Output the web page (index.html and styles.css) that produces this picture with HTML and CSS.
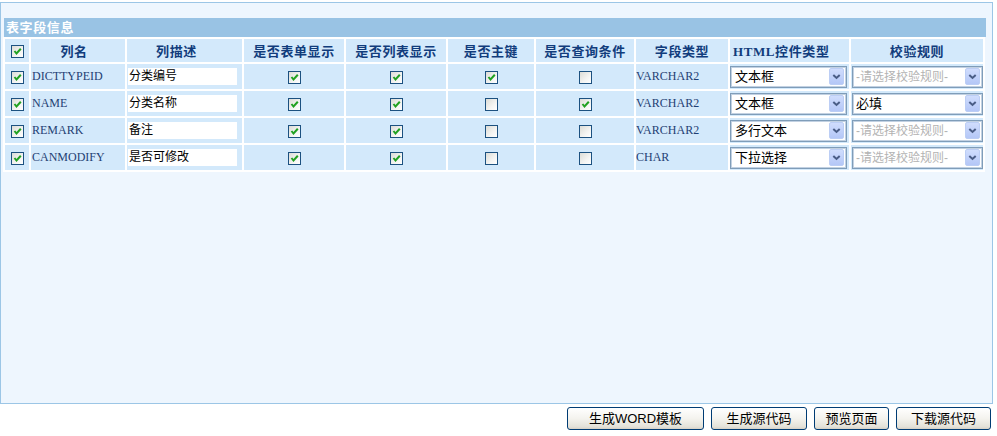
FILE: index.html
```html
<!DOCTYPE html>
<html lang="zh">
<head>
<meta charset="utf-8">
<title>表字段信息</title>
<link rel="stylesheet" href="styles.css">
</head>
<body>
<div class="panel">
  <div class="title">表字段信息</div>
  <table class="grid">
    <colgroup>
      <col class="c1"><col class="c2"><col class="c3"><col class="c4"><col class="c5">
      <col class="c6"><col class="c7"><col class="c8"><col class="c9"><col class="c10">
    </colgroup>
    <thead>
      <tr>
        <th><span class="cb"><svg viewBox="0 0 11 11" width="11" height="11"><path d="M2.5 5 L4.5 7.5 L8.8 2.8" fill="none" stroke="#21a121" stroke-width="2"/></svg></span></th>
        <th class="h-name">列名</th>
        <th class="h-desc">列描述</th>
        <th>是否表单显示</th>
        <th>是否列表显示</th>
        <th>是否主键</th>
        <th>是否查询条件</th>
        <th>字段类型</th>
        <th class="h-html">HTML控件类型</th>
        <th>校验规则</th>
      </tr>
    </thead>
    <tbody>
      <tr>
        <td class="ctr"><span class="cb"><svg viewBox="0 0 11 11" width="11" height="11"><path d="M2.5 5 L4.5 7.5 L8.8 2.8" fill="none" stroke="#21a121" stroke-width="2"/></svg></span></td>
        <td class="name">DICTTYPEID</td>
        <td><div class="txt">分类编号</div></td>
        <td class="ctr"><span class="cb"><svg viewBox="0 0 11 11" width="11" height="11"><path d="M2.5 5 L4.5 7.5 L8.8 2.8" fill="none" stroke="#21a121" stroke-width="2"/></svg></span></td>
        <td class="ctr"><span class="cb"><svg viewBox="0 0 11 11" width="11" height="11"><path d="M2.5 5 L4.5 7.5 L8.8 2.8" fill="none" stroke="#21a121" stroke-width="2"/></svg></span></td>
        <td class="ctr"><span class="cb"><svg viewBox="0 0 11 11" width="11" height="11"><path d="M2.5 5 L4.5 7.5 L8.8 2.8" fill="none" stroke="#21a121" stroke-width="2"/></svg></span></td>
        <td class="ctr"><span class="cb"></span></td>
        <td class="type">VARCHAR2</td>
        <td><div class="sel sel-ctrl"><span class="val">文本框</span><span class="arrow"><svg viewBox="0 0 13 15" width="13" height="15"><path d="M3.3 6 L6.5 9 L9.7 6" fill="none" stroke="#4a5d86" stroke-width="2"/></svg></span></div></td>
        <td><div class="sel sel-rule"><span class="val ph">-请选择校验规则-</span><span class="arrow"><svg viewBox="0 0 13 15" width="13" height="15"><path d="M3.3 6 L6.5 9 L9.7 6" fill="none" stroke="#4a5d86" stroke-width="2"/></svg></span></div></td>
      </tr>
      <tr>
        <td class="ctr"><span class="cb"><svg viewBox="0 0 11 11" width="11" height="11"><path d="M2.5 5 L4.5 7.5 L8.8 2.8" fill="none" stroke="#21a121" stroke-width="2"/></svg></span></td>
        <td class="name">NAME</td>
        <td><div class="txt">分类名称</div></td>
        <td class="ctr"><span class="cb"><svg viewBox="0 0 11 11" width="11" height="11"><path d="M2.5 5 L4.5 7.5 L8.8 2.8" fill="none" stroke="#21a121" stroke-width="2"/></svg></span></td>
        <td class="ctr"><span class="cb"><svg viewBox="0 0 11 11" width="11" height="11"><path d="M2.5 5 L4.5 7.5 L8.8 2.8" fill="none" stroke="#21a121" stroke-width="2"/></svg></span></td>
        <td class="ctr"><span class="cb"></span></td>
        <td class="ctr"><span class="cb"><svg viewBox="0 0 11 11" width="11" height="11"><path d="M2.5 5 L4.5 7.5 L8.8 2.8" fill="none" stroke="#21a121" stroke-width="2"/></svg></span></td>
        <td class="type">VARCHAR2</td>
        <td><div class="sel sel-ctrl"><span class="val">文本框</span><span class="arrow"><svg viewBox="0 0 13 15" width="13" height="15"><path d="M3.3 6 L6.5 9 L9.7 6" fill="none" stroke="#4a5d86" stroke-width="2"/></svg></span></div></td>
        <td><div class="sel sel-rule"><span class="val">必填</span><span class="arrow"><svg viewBox="0 0 13 15" width="13" height="15"><path d="M3.3 6 L6.5 9 L9.7 6" fill="none" stroke="#4a5d86" stroke-width="2"/></svg></span></div></td>
      </tr>
      <tr>
        <td class="ctr"><span class="cb"><svg viewBox="0 0 11 11" width="11" height="11"><path d="M2.5 5 L4.5 7.5 L8.8 2.8" fill="none" stroke="#21a121" stroke-width="2"/></svg></span></td>
        <td class="name">REMARK</td>
        <td><div class="txt">备注</div></td>
        <td class="ctr"><span class="cb"><svg viewBox="0 0 11 11" width="11" height="11"><path d="M2.5 5 L4.5 7.5 L8.8 2.8" fill="none" stroke="#21a121" stroke-width="2"/></svg></span></td>
        <td class="ctr"><span class="cb"><svg viewBox="0 0 11 11" width="11" height="11"><path d="M2.5 5 L4.5 7.5 L8.8 2.8" fill="none" stroke="#21a121" stroke-width="2"/></svg></span></td>
        <td class="ctr"><span class="cb"></span></td>
        <td class="ctr"><span class="cb"></span></td>
        <td class="type">VARCHAR2</td>
        <td><div class="sel sel-ctrl"><span class="val">多行文本</span><span class="arrow"><svg viewBox="0 0 13 15" width="13" height="15"><path d="M3.3 6 L6.5 9 L9.7 6" fill="none" stroke="#4a5d86" stroke-width="2"/></svg></span></div></td>
        <td><div class="sel sel-rule"><span class="val ph">-请选择校验规则-</span><span class="arrow"><svg viewBox="0 0 13 15" width="13" height="15"><path d="M3.3 6 L6.5 9 L9.7 6" fill="none" stroke="#4a5d86" stroke-width="2"/></svg></span></div></td>
      </tr>
      <tr>
        <td class="ctr"><span class="cb"><svg viewBox="0 0 11 11" width="11" height="11"><path d="M2.5 5 L4.5 7.5 L8.8 2.8" fill="none" stroke="#21a121" stroke-width="2"/></svg></span></td>
        <td class="name">CANMODIFY</td>
        <td><div class="txt">是否可修改</div></td>
        <td class="ctr"><span class="cb"><svg viewBox="0 0 11 11" width="11" height="11"><path d="M2.5 5 L4.5 7.5 L8.8 2.8" fill="none" stroke="#21a121" stroke-width="2"/></svg></span></td>
        <td class="ctr"><span class="cb"><svg viewBox="0 0 11 11" width="11" height="11"><path d="M2.5 5 L4.5 7.5 L8.8 2.8" fill="none" stroke="#21a121" stroke-width="2"/></svg></span></td>
        <td class="ctr"><span class="cb"></span></td>
        <td class="ctr"><span class="cb"></span></td>
        <td class="type">CHAR</td>
        <td><div class="sel sel-ctrl"><span class="val">下拉选择</span><span class="arrow"><svg viewBox="0 0 13 15" width="13" height="15"><path d="M3.3 6 L6.5 9 L9.7 6" fill="none" stroke="#4a5d86" stroke-width="2"/></svg></span></div></td>
        <td><div class="sel sel-rule"><span class="val ph">-请选择校验规则-</span><span class="arrow"><svg viewBox="0 0 13 15" width="13" height="15"><path d="M3.3 6 L6.5 9 L9.7 6" fill="none" stroke="#4a5d86" stroke-width="2"/></svg></span></div></td>
      </tr>
    </tbody>
  </table>
</div>
<div class="actions">
  <button class="btn btn-word">生成WORD模板</button>
  <button class="btn btn-src">生成源代码</button>
  <button class="btn btn-prev">预览页面</button>
  <button class="btn btn-down">下载源代码</button>
</div>
</body>
</html>
```

FILE: styles.css
```css
html, body {
  margin: 0;
  padding: 0;
  background: #ffffff;
}

body {
  font-family: "Liberation Serif", "Noto Sans CJK SC", serif;
  font-size: 12px;
}

.panel {
  box-sizing: border-box;
  width: 993px;
  height: 402px;
  margin-top: 2px;
  border: 1px solid #9cc6e6;
  background: #eef6fe;
  padding: 15px 0 0 3px;
}

.title {
  width: 982px;
  height: 19px;
  background: #99c3e4;
  color: #ffffff;
  font-family: "Liberation Serif", "Noto Sans CJK SC", serif;
  font-weight: bold;
  font-size: 13px;
  line-height: 19px;
  padding-left: 2px;
  box-sizing: border-box;
  letter-spacing: 0.6px;
}

.grid {
  margin-left: -1px;
  width: 982px;
  table-layout: fixed;
  border-collapse: separate;
  border-spacing: 2px;
  background: #ffffff;
}

.c1 { width: 24px; }
.c2 { width: 94px; }
.c3 { width: 115px; }
.c4 { width: 100px; }
.c5 { width: 100px; }
.c6 { width: 86px; }
.c7 { width: 98px; }
.c8 { width: 92px; }
.c9 { width: 119px; }
.c10 { width: 132px; }

.grid th,
.grid td {
  background: #d3e9fb;
  padding: 0;
  vertical-align: middle;
  overflow: hidden;
  white-space: nowrap;
}

.grid th {
  height: 23px;
  color: #113c7c;
  font-family: "Liberation Serif", "Noto Sans CJK SC", serif;
  font-weight: bold;
  font-size: 13px;
  letter-spacing: 0.6px;
  text-align: center;
}

.grid th.h-name { padding-right: 8px; }
.grid th.h-desc { padding-right: 16px; }
.grid th.h-html { text-align: left; padding-left: 3px; }

.grid td {
  height: 25px;
  color: #1f3f74;
}

.grid td.ctr { text-align: center; }

.grid td.name {
  padding-left: 1px;
  font-family: "Liberation Serif", serif;
  font-size: 12px;
}

.grid td.type {
  font-family: "Liberation Serif", serif;
  font-size: 12px;
}

.cb {
  display: inline-block;
  box-sizing: border-box;
  width: 13px;
  height: 13px;
  border: 1px solid #1c5180;
  background: linear-gradient(135deg, #dcdcd6 0%, #f4f4f2 60%, #ffffff 100%);
  vertical-align: middle;
  line-height: 0;
}

.cb svg {
  display: block;
}

.txt {
  box-sizing: border-box;
  width: 109px;
  height: 17px;
  margin-left: 1px;
  padding-left: 1px;
  background: #ffffff;
  color: #000000;
  font-family: "Liberation Sans", "Noto Sans CJK SC", sans-serif;
  font-size: 12px;
  line-height: 17px;
}

.sel {
  box-sizing: border-box;
  display: flex;
  align-items: center;
  height: 22px;
  border: 1px solid #7f9db9;
  box-shadow: inset 0 0 0 1px #c2d1e2;
  background: #ffffff;
  padding: 0 2px 0 4px;
  color: #000000;
  font-family: "Liberation Sans", "Noto Sans CJK SC", sans-serif;
  font-size: 13px;
}

.sel-ctrl { width: 117px; }
.sel-rule { width: 131px; margin-left: 1px; padding-left: 3px; }

.val {
  flex: 1;
  overflow: hidden;
  white-space: nowrap;
  line-height: 18px;
}

.val.ph {
  color: #b3b3b3;
  font-size: 12px;
}

.arrow {
  box-sizing: border-box;
  flex: none;
  width: 15px;
  height: 17px;
  border: 1px solid #bccef5;
  border-radius: 2px;
  background: linear-gradient(#d0ddfd, #b4c7f7);
  display: flex;
  align-items: center;
  justify-content: center;
}

.arrow svg {
  display: block;
}

.actions {
  display: flex;
  justify-content: flex-end;
  gap: 7px;
  margin-top: 3px;
  padding-right: 6px;
}

.btn {
  box-sizing: border-box;
  height: 23px;
  padding: 0;
  border: 1px solid #003c74;
  border-radius: 3px;
  background: linear-gradient(#ffffff 0%, #f4f3ee 50%, #e3e1d8 90%, #d6d0c5 100%);
  color: #000000;
  font-family: "Liberation Sans", "Noto Sans CJK SC", sans-serif;
  font-size: 13px;
  line-height: 21px;
}

.btn-word { width: 137px; }
.btn-src { width: 96px; }
.btn-prev { width: 75px; }
.btn-down { width: 95px; }
```
